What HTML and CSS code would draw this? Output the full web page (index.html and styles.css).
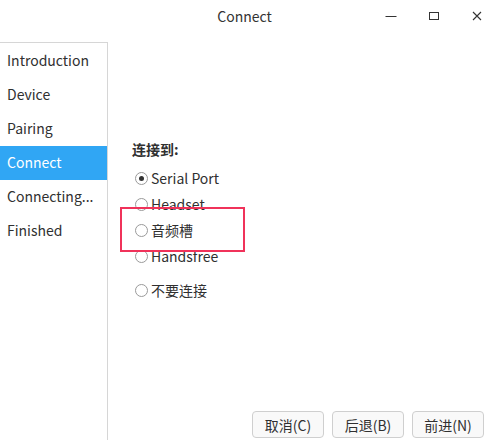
FILE: index.html
```html
<!DOCTYPE html>
<html>
<head>
<meta charset="utf-8">
<link rel="stylesheet" href="styles.css">
</head>
<body>
<div class="window">
  <div class="titlebar">
    <div class="title">Connect</div>
    <div class="controls">
      <svg class="ctl ctl-min" width="12" height="12" viewBox="0 0 12 12"><line x1="0.5" y1="6.5" x2="11.5" y2="6.5" stroke="#333" stroke-width="1"/></svg>
      <svg class="ctl ctl-max" width="12" height="12" viewBox="0 0 12 12"><rect x="1.5" y="2.5" width="9" height="7" fill="none" stroke="#333" stroke-width="1"/></svg>
      <svg class="ctl ctl-close" width="12" height="12" viewBox="0 0 12 12"><path d="M2 2 L10 10 M10 2 L2 10" stroke="#333" stroke-width="1.1" fill="none"/></svg>
    </div>
  </div>
  <div class="body">
    <div class="sidebar">
      <div class="item">Introduction</div>
      <div class="item">Device</div>
      <div class="item">Pairing</div>
      <div class="item active">Connect</div>
      <div class="item">Connecting...</div>
      <div class="item">Finished</div>
    </div>
    <div class="main">
      <div class="group">
        <div class="label">连接到:</div>
        <div class="option"><span class="radio checked"></span><span>Serial Port</span></div>
        <div class="option"><span class="radio"></span><span>Headset</span></div>
        <div class="option"><span class="radio"></span><span>音频槽</span></div>
        <div class="option"><span class="radio"></span><span>Handsfree</span></div>
        <div class="option last"><span class="radio"></span><span>不要连接</span></div>
      </div>
      <div class="buttons">
        <button class="btn">取消(C)</button>
        <button class="btn">后退(B)</button>
        <button class="btn">前进(N)</button>
      </div>
    </div>
  </div>
  <div class="highlight"></div>
</div>
</body>
</html>
```
FILE: styles.css
```css
html, body {
  margin: 0;
  padding: 0;
  background: #ffffff;
}
body {
  font-family: "Noto Sans CJK SC", "Noto Sans", sans-serif;
  color: #303030;
}
.window {
  position: relative;
  width: 489px;
  height: 440px;
  overflow: hidden;
  display: flex;
  flex-direction: column;
}
.titlebar {
  height: 42px;
  flex: none;
  position: relative;
  display: flex;
  align-items: center;
  justify-content: center;
}
.title {
  font-size: 14px;
  line-height: 20px;
  margin-top: -10px;
  color: #333;
}
.controls {
  position: absolute;
  right: 0;
  top: 10px;
  display: flex;
  gap: 31px;
  padding-right: 6px;
}
.ctl {
  display: block;
}
.body {
  flex: 1;
  display: flex;
  min-height: 0;
}
.sidebar {
  width: 107px;
  flex: none;
  border-top: 1px solid #d6d6d6;
  border-right: 1px solid #d6d6d6;
  padding-top: 1px;
  box-sizing: content-box;
}
.item {
  height: 34px;
  line-height: 32px;
  font-size: 14px;
  padding-left: 7px;
  white-space: nowrap;
}
.item.active {
  background: #30a6f4;
  color: #ffffff;
}
.main {
  flex: 1;
  display: flex;
  flex-direction: column;
  justify-content: space-between;
}
.group {
  padding-top: 97px;
  padding-left: 24px;
}
.label {
  font-weight: bold;
  font-size: 14px;
  line-height: 20px;
  margin-bottom: 6px;
}
.option {
  height: 26px;
  display: flex;
  align-items: center;
  font-size: 14px;
  gap: 3px;
  padding-left: 3px;
}
.option.last {
  margin-top: 8px;
}
.radio {
  width: 11px;
  height: 11px;
  border: 1px solid #9a9a9a;
  border-radius: 50%;
  box-sizing: content-box;
  display: inline-flex;
  align-items: center;
  justify-content: center;
  background: #fff;
}
.radio.checked::after {
  content: "";
  width: 5px;
  height: 5px;
  border-radius: 50%;
  background: #333;
}
.buttons {
  display: flex;
  justify-content: flex-end;
  gap: 8px;
  padding: 0 5px 2px 0;
}
.btn {
  width: 72px;
  height: 27px;
  border: 1px solid #cfcfcf;
  border-radius: 4px;
  background: #f9f9f9;
  font-family: "Noto Sans CJK SC", "Noto Sans", sans-serif;
  font-size: 14px;
  color: #303030;
  padding: 0;
}
.highlight {
  position: absolute;
  left: 120px;
  top: 207px;
  width: 125px;
  height: 45px;
  border: 2px solid #f0325a;
  box-sizing: border-box;
  pointer-events: none;
}
```
